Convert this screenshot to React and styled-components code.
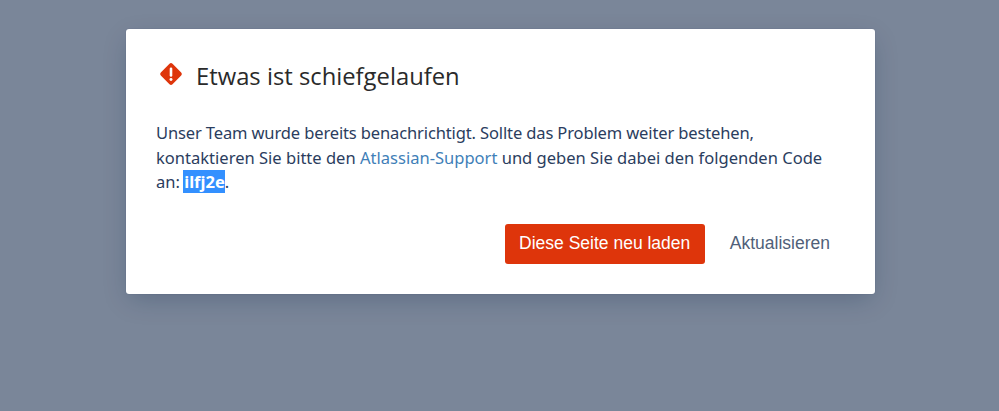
import React from "react";
import styled, { createGlobalStyle } from "styled-components";

const Global = createGlobalStyle`
  html, body { margin: 0; padding: 0; height: 100%; }
  body { background: #7a8699; overflow: hidden; }
`;

const Page = styled.div`
  width: 999px;
  height: 411px;
  background: #7a8699;
  display: flex;
  flex-direction: column;
  align-items: center;
  padding-top: 29px;
  box-sizing: border-box;
`;

const Dialog = styled.div`
  width: 749px;
  height: 265px;
  margin-left: 2px;
  box-sizing: border-box;
  padding: 30px;
  background: #fff;
  border-radius: 3px;
  box-shadow: 0 0 1px rgba(9, 30, 66, 0.31), 0 8px 24px -4px rgba(9, 30, 66, 0.25);
  display: flex;
  flex-direction: column;
`;

const Header = styled.div`
  display: flex;
  align-items: center;
  height: 36px;
  margin-left: 2px;
`;

const IconBox = styled.svg`
  width: 26px;
  height: 26px;
  margin-bottom: 6px;
  flex: none;
`;

const Title = styled.h1`
  margin: 0 0 2px 12px;
  font: 400 23.8px/36px "Open Sans", sans-serif;
  color: #2a2a2a;
`;

const Body = styled.p`
  margin: 26px 0 0;
  font: 400 16.55px/24.6px "Noto Sans", sans-serif;
  color: #2b3d5e;
  white-space: nowrap;
`;

const TightLine = styled.span`
  letter-spacing: -0.14px;
`;

const Link = styled.a`
  color: #3f7fb8;
  text-decoration: none;
`;

const Code = styled.strong`
  background: #3390ff;
  color: #fff;
  font-weight: 700;
  margin-left: -1px;
  padding-left: 1px;
`;

const Actions = styled.div`
  display: flex;
  justify-content: flex-end;
  align-items: center;
  margin-top: 29px;
  gap: 10px;
`;

const Primary = styled.button`
  height: 40px;
  padding: 0 14.5px;
  border: 0;
  border-radius: 3px;
  background: #de350b;
  color: #fff;
  font: 400 17.5px "Liberation Sans", Arial, sans-serif;
`;

const Secondary = styled.button`
  height: 40px;
  padding: 0 15px;
  border: 0;
  background: transparent;
  color: #505f79;
  font: 400 17.5px "Liberation Sans", Arial, sans-serif;
`;

const ErrorIcon = () => (
  <IconBox viewBox="0 0 24 24" aria-hidden="true">
    <path
      fill="#de350b"
      d="M13.4 2.6l8 8a2 2 0 0 1 0 2.8l-8 8a2 2 0 0 1-2.8 0l-8-8a2 2 0 0 1 0-2.8l8-8a2 2 0 0 1 2.8 0z"
    />
    <rect x="10.8" y="6" width="2.4" height="8.6" rx="1.2" fill="#fff" />
    <circle cx="12" cy="17" r="1.35" fill="#fff" />
  </IconBox>
);

export default function App() {
  return (
    <Page>
      <Global />
      <Dialog>
        <Header>
          <ErrorIcon />
          <Title>Etwas ist schiefgelaufen</Title>
        </Header>
        <Body>
          <TightLine>Unser Team wurde bereits benachrichtigt. Sollte das Problem weiter bestehen,</TightLine>
          <br />
          kontaktieren Sie bitte den <Link href="#">Atlassian-Support</Link> und geben Sie dabei den folgenden Code
          <br />
          an: <Code>ilfj2e</Code>.
        </Body>
        <Actions>
          <Primary>Diese Seite neu laden</Primary>
          <Secondary>Aktualisieren</Secondary>
        </Actions>
      </Dialog>
    </Page>
  );
}
